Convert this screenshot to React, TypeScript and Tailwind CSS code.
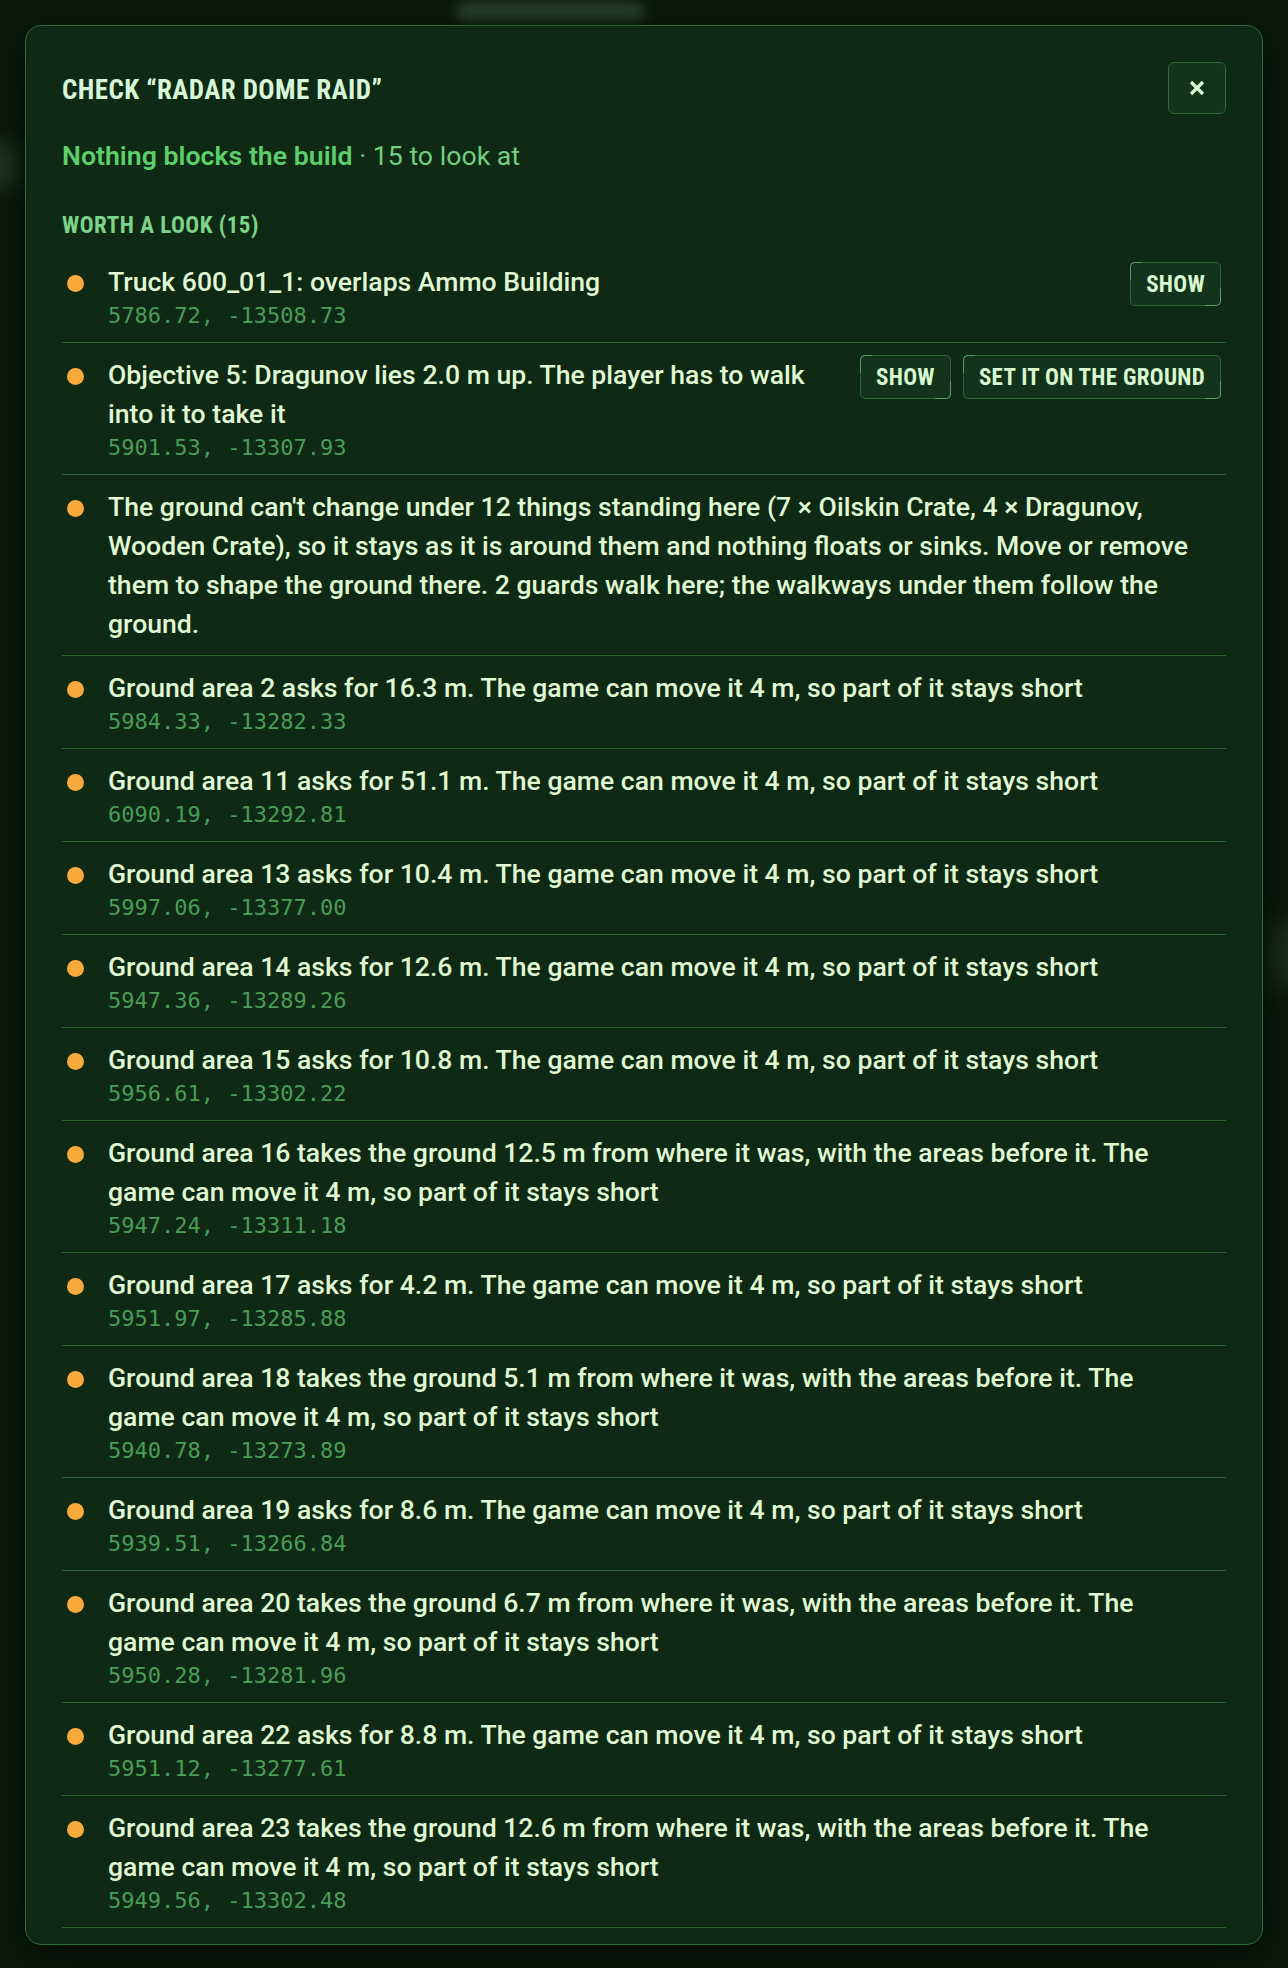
type Issue = {
  text: string;
  at?: string;
  actions?: string[];
};

const issues: Issue[] = [
  { text: "Truck 600_01_1: overlaps Ammo Building", at: "5786.72, -13508.73", actions: ["Show"] },
  {
    text: "Objective 5: Dragunov lies 2.0 m up. The player has to walk into it to take it",
    at: "5901.53, -13307.93",
    actions: ["Show", "Set it on the ground"],
  },
  {
    text: "The ground can't change under 12 things standing here (7 × Oilskin Crate, 4 × Dragunov, Wooden Crate), so it stays as it is around them and nothing floats or sinks. Move or remove them to shape the ground there. 2 guards walk here; the walkways under them follow the ground.",
  },
  { text: "Ground area 2 asks for 16.3 m. The game can move it 4 m, so part of it stays short", at: "5984.33, -13282.33" },
  { text: "Ground area 11 asks for 51.1 m. The game can move it 4 m, so part of it stays short", at: "6090.19, -13292.81" },
  { text: "Ground area 13 asks for 10.4 m. The game can move it 4 m, so part of it stays short", at: "5997.06, -13377.00" },
  { text: "Ground area 14 asks for 12.6 m. The game can move it 4 m, so part of it stays short", at: "5947.36, -13289.26" },
  { text: "Ground area 15 asks for 10.8 m. The game can move it 4 m, so part of it stays short", at: "5956.61, -13302.22" },
  {
    text: "Ground area 16 takes the ground 12.5 m from where it was, with the areas before it. The game can move it 4 m, so part of it stays short",
    at: "5947.24, -13311.18",
  },
  { text: "Ground area 17 asks for 4.2 m. The game can move it 4 m, so part of it stays short", at: "5951.97, -13285.88" },
  {
    text: "Ground area 18 takes the ground 5.1 m from where it was, with the areas before it. The game can move it 4 m, so part of it stays short",
    at: "5940.78, -13273.89",
  },
  { text: "Ground area 19 asks for 8.6 m. The game can move it 4 m, so part of it stays short", at: "5939.51, -13266.84" },
  {
    text: "Ground area 20 takes the ground 6.7 m from where it was, with the areas before it. The game can move it 4 m, so part of it stays short",
    at: "5950.28, -13281.96",
  },
  { text: "Ground area 22 asks for 8.8 m. The game can move it 4 m, so part of it stays short", at: "5951.12, -13277.61" },
  {
    text: "Ground area 23 takes the ground 12.6 m from where it was, with the areas before it. The game can move it 4 m, so part of it stays short",
    at: "5949.56, -13302.48",
  },
];

function ActionButton({ label }: { label: string }) {
  return (
    <button
      type="button"
      className="relative h-[44px] shrink-0 rounded-[5px] border border-[#2c6733] bg-[#13331a] px-[15px] font-['Roboto_Condensed',sans-serif] text-[23px] font-bold uppercase leading-none tracking-[0.3px] text-[#d8f7d0] hover:bg-[#1a4221]"
    >
      {/* corner marks */}
      <span className="pointer-events-none absolute -left-px -top-px h-[18px] w-[12px] rounded-tl-[5px] border-l border-t border-[#5c9c63]" />
      <span className="pointer-events-none absolute -bottom-px -right-px h-[18px] w-[16px] rounded-br-[5px] border-b border-r border-[#5c9c63]" />
      {label}
    </button>
  );
}

function IssueRow({ issue }: { issue: Issue }) {
  return (
    <li className="flex items-start gap-6 border-b border-[#2b6631] py-3 pr-[5px]">
      <span className="ml-[5px] mt-[13px] h-[17px] w-[17px] shrink-0 rounded-full bg-[#f7a93b]" />
      <div className="min-w-0 max-w-[1088px] flex-1">
        <p className="text-[26.6px] leading-[39px] font-medium text-[#e0f7d3]">{issue.text}</p>
        {issue.at && (
          <p className="font-['DejaVu_Sans_Mono',monospace] text-[22px] leading-[29px] text-[#4b9c57]">{issue.at}</p>
        )}
      </div>
      {issue.actions && (
        <div className="flex shrink-0 gap-3">
          {issue.actions.map((a) => (
            <ActionButton key={a} label={a} />
          ))}
        </div>
      )}
    </li>
  );
}

export default function App() {
  return (
    <div className="relative min-h-screen overflow-hidden bg-[#091a0c] px-[25px] pb-[25px] pt-[25px] font-['Roboto',sans-serif]">
      {/* blurred page behind the dialog */}
      <div className="pointer-events-none absolute left-[455px] top-[2px] h-[20px] w-[190px] rounded-full bg-[#3b5a40] opacity-60 blur-[6px]" />
      <div className="pointer-events-none absolute -left-[20px] top-[140px] h-[50px] w-[40px] rounded-full bg-[#2a4a2f] opacity-60 blur-[10px]" />
      <div className="pointer-events-none absolute -right-[20px] top-[920px] h-[70px] w-[40px] rounded-full bg-[#2a4a2f] opacity-50 blur-[12px]" />

      <div className="relative rounded-2xl border-[1.5px] border-[#2e6b35] bg-[#0e2914] px-9 pb-4 pt-9 shadow-[0_10px_40px_rgba(0,0,0,0.6)]">
        <div className="flex items-center justify-between">
          <h2 className="mt-1 font-['Roboto_Condensed',sans-serif] text-[27px] font-bold uppercase tracking-[0.4px] text-[#d7f6d8]">
            Check “Radar Dome Raid”
          </h2>
          <button
            type="button"
            aria-label="Close"
            className="flex h-[52px] w-[58px] items-center justify-center rounded-[6px] border-[1.5px] border-[#2e6b35] bg-[#143419] text-[#d8f7d0]"
          >
            <svg width="16" height="16" viewBox="0 0 16 16" fill="none" stroke="currentColor" strokeWidth="3.2">
              <path d="M2 2L14 14M14 2L2 14" />
            </svg>
          </button>
        </div>

        <p className="mt-6 text-[26.7px] leading-[36px] text-[#72cf7f]">
          <span className="font-semibold text-[#5cce6a]">Nothing blocks the build</span> · 15 to look at
        </p>

        <h3 className="mt-[38px] font-['Roboto_Condensed',sans-serif] text-[23px] font-bold uppercase leading-[28px] tracking-[0.5px] text-[#7dd38a]">
          Worth a look (15)
        </h3>

        <ul className="mt-[10px]">
          {issues.map((issue, i) => (
            <IssueRow key={i} issue={issue} />
          ))}
        </ul>
      </div>
    </div>
  );
}
